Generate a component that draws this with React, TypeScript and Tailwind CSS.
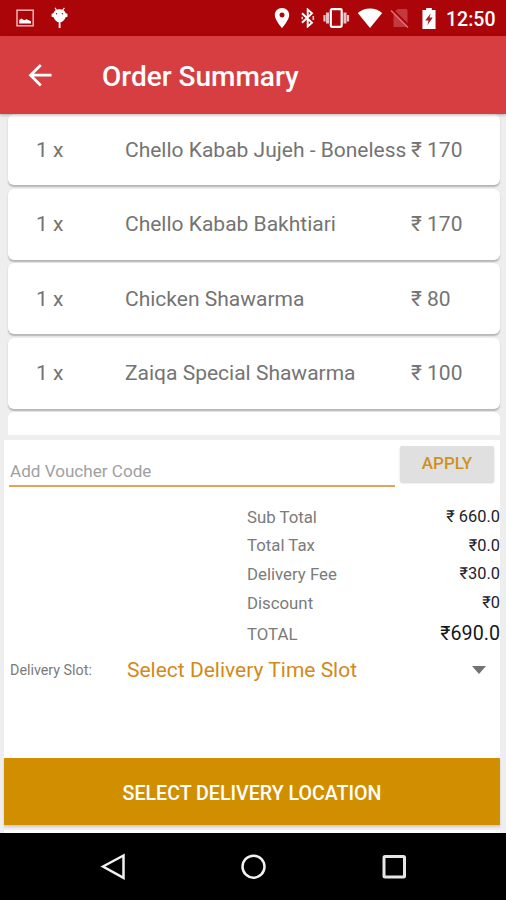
import React from "react";

type Item = { qty: string; name: string; price: string };

const items: Item[] = [
  { qty: "1 x", name: "Chello Kabab Jujeh - Boneless", price: "₹ 170" },
  { qty: "1 x", name: "Chello Kabab Bakhtiari", price: "₹ 170" },
  { qty: "1 x", name: "Chicken Shawarma", price: "₹ 80" },
  { qty: "1 x", name: "Zaiqa Special Shawarma", price: "₹ 100" },
];

const charges = [
  { label: "Sub Total", value: "₹ 660.0" },
  { label: "Total Tax", value: "₹0.0" },
  { label: "Delivery Fee", value: "₹30.0" },
  { label: "Discount", value: "₹0" },
];

function StatusBar() {
  return (
    <header className="flex h-9 shrink-0 items-center bg-[#ab0509] text-white">
      <svg className="ml-4 h-[18px] w-[18px]" viewBox="0 0 18 18" fill="none">
        <rect x="1" y="1.2" width="16.2" height="15.6" stroke="#f0b4b4" strokeWidth="1.5" />
        <path d="M3.2 14.6V11l2.2-1.6L8 11.2l2.6-1 4.4 2v2.4z" fill="#fff" />
      </svg>
      <svg className="ml-[17px] h-[22px] w-[17px]" viewBox="0 0 17 22">
        <path d="M4 .8 6 4M13.4.8 11.2 4" stroke="#fff" strokeWidth="1.2" />
        <path
          fill="#fff"
          d="M8.5 2.2c3.2 0 5.4 1.4 6.1 3.8l1.9 1v2.7l-1.9.6c-.8 2.7-2.8 4.6-5.1 5v5.7H7.7v-5.7c-2.3-.4-4.3-2.3-5.1-5L.6 9.7V7l1.900-1c.6-2.400 2.800-3.800 6-3.800z"
        />
        <circle cx="5.6" cy="6.8" r=".8" fill="#b51a1e" />
        <circle cx="11.5" cy="6.8" r=".8" fill="#b51a1e" />
      </svg>
      <div className="ml-auto flex items-center">
        <svg className="h-5 w-4" viewBox="0 0 16 20">
          <path fill="#fff" fillRule="evenodd" d="M8 0C3.9 0 .8 3.1.8 7c0 5 7.2 13 7.2 13s7.2-8 7.2-13c0-3.9-3.1-7-7.2-7zm0 4.5a2.500 2.500 0 1 1 0 5 2.500 2.500 0 0 1 0-5z" />
        </svg>
        <svg className="ml-[10px] h-5 w-4" viewBox="0 0 16 20" fill="none" stroke="#fff" strokeWidth="1.9">
          <path d="M2 5.2 12 14.8 7.7 18.500V1.500L12 5.2 2 14.8" />
          <path d="M13.3 8v4M2.300 8.800v2.400" strokeWidth="1.6" opacity=".8" />
        </svg>
        <svg className="ml-[6px] h-5 w-7" viewBox="0 0 28 20" fill="none">
          <rect x="8.8" y="1.2" width="10.9" height="17.6" rx="1.2" stroke="#fff" strokeWidth="2.2" />
          <path d="M5.5 4.5v11M23 4.5v11" stroke="#fff" strokeOpacity=".75" strokeWidth="3" />
          <path d="M2.5 7v6.5M26 7v6.5" stroke="#fff" strokeOpacity=".75" strokeWidth="2.2" />
        </svg>
        <svg className="ml-[7px] h-5 w-[26px]" viewBox="0 0 26 20">
          <path fill="#fff" d="M.8 5C4.5 1.8 8.5.4 13 .4S21.5 1.8 25.200 5L13 20z" />
        </svg>
        <svg className="ml-[7px] h-5 w-5" viewBox="0 0 20 20">
          <path fill="#c3393d" d="M7.5 1H16q1.5 0 1.5 1.5V19H3.500V5z" />
          <path d="M2.8 2 20 19" stroke="#ab0509" strokeWidth="2" />
          <path d="M1 2.500 18 19.500" stroke="#d87475" strokeWidth="1.5" />
        </svg>
        <svg className="ml-3 h-[21px] w-[14px]" viewBox="0 0 15 22" preserveAspectRatio="none">
          <path fill="#fff" d="M4.500 0h6v2.200h4V22H.5V2.200h4z" />
          <path fill="#a51a1e" d="M9.4 5.5 3.5 13H7l-1.200 5L11.500 10H8z" />
        </svg>
        <span className="ml-[10px] mt-[3px] w-[60px] whitespace-nowrap text-[19.5px] leading-5 font-medium">12:50</span>
      </div>
    </header>
  );
}

function AppBar() {
  return (
    <div className="relative z-10 flex h-[78px] shrink-0 items-center bg-[#d63e41] text-white shadow-[0_1px_3px_rgba(0,0,0,0.3)]">
      <svg className="ml-[28px] h-6 w-6" viewBox="0 0 24 24" fill="none" stroke="#fff" strokeWidth="2.7">
        <path d="M23.5 12.2H2.5M12.8 2 2.5 12.2l10.300 10.300" />
      </svg>
      <h1 className="mt-[3px] ml-[50px] text-[28px] leading-8 font-medium whitespace-nowrap">Order Summary</h1>
    </div>
  );
}

function ItemCard({ item }: { item: Item }) {
  return (
    <div className="flex h-[71px] shrink-0 items-center rounded-[6px] bg-white pt-[2px] pl-7 text-[21px] text-[#747474] shadow-[0_1.5px_1.5px_rgba(0,0,0,0.24)]">
      <span className="w-[89px]">{item.qty}</span>
      <span className="w-[286px] whitespace-nowrap">{item.name}</span>
      <span className="whitespace-nowrap">{item.price}</span>
    </div>
  );
}

function NavBar() {
  return (
    <nav className="flex h-[67px] shrink-0 items-center bg-black">
      <svg className="ml-[100px] h-7 w-[26px]" viewBox="0 0 26 28" fill="none" stroke="#f2f2f2" strokeWidth="2.5">
        <path d="M3 13.5 23.5 2.5v22.3z" />
      </svg>
      <svg className="ml-[114px] h-7 w-7" viewBox="0 0 28 28" fill="none" stroke="#f2f2f2" strokeWidth="2.5">
        <circle cx="13.5" cy="13.7" r="11" />
      </svg>
      <svg className="ml-[113px] h-7 w-7" viewBox="0 0 28 28" fill="none" stroke="#e6e6e6" strokeWidth="3">
        <rect x="3" y="3.5" width="20.5" height="20.5" rx="1" />
      </svg>
    </nav>
  );
}

export default function App() {
  return (
    <div className="flex h-[900px] w-[506px] flex-col overflow-hidden bg-[#eeeeee] font-[Roboto,sans-serif]">
      <StatusBar />
      <AppBar />
      <main className="flex h-[719px] shrink-0 flex-col">
        <div className="flex h-[321px] shrink-0 flex-col gap-[3.5px] overflow-hidden pr-[6px] pl-2">
          {items.map((item) => (
            <ItemCard key={item.name} item={item} />
          ))}
          <div className="h-[71px] shrink-0 rounded-[6px] bg-white" />
        </div>

        <section className="mt-[5px] mr-[6px] ml-1 flex h-[385px] shrink-0 flex-col bg-white">
          <div className="flex h-[60px] shrink-0 pl-[5px]">
            <div className="flex h-[47px] w-[386px] items-end border-b-2 border-b-[#dfa558] pl-[1px] text-[17.1px] text-[#a0a0a0]">
              Add Voucher Code
            </div>
            <button className="mt-[6px] ml-[5px] flex h-[36px] w-[94px] items-center justify-center rounded-[2px] bg-[#e0e0e0] text-[17px] font-medium text-[#cf911d] shadow-[0_1px_2px_rgba(0,0,0,0.18)]">
              APPLY
            </button>
          </div>
          <dl className="flex flex-col pt-[3px] pl-[243px] text-[16.8px]">
            {charges.map((c) => (
              <div key={c.label} className="flex h-[28.7px] items-center justify-between">
                <dt className="text-[#7b7b7b]">{c.label}</dt>
                <dd className="text-[16.4px] text-[#22222c]">{c.value}</dd>
              </div>
            ))}
            <div className="flex h-[33px] items-center justify-between">
              <dt className="text-[#7b7b7b]">TOTAL</dt>
              <dd className="text-[19.7px] text-[#16161f]">₹690.0</dd>
            </div>
          </dl>
          <div className="flex h-[39px] items-center pl-[6px]">
            <span className="w-[117px] text-[14.3px] text-[#7b7b7b]">Delivery Slot:</span>
            <span className="text-[21px] whitespace-nowrap text-[#d28a18]">Select Delivery Time Slot</span>
            <svg className="mr-[14px] mb-[1px] ml-auto h-[8px] w-[14px]" viewBox="0 0 14 8">
              <path d="M0 0h14L7 8z" fill="#737373" />
            </svg>
          </div>
          <button className="mt-auto flex h-[67px] shrink-0 items-center justify-center bg-[#d18f00] pt-[4px] text-[19.6px] font-medium text-white shadow-[0_2px_2px_rgba(0,0,0,0.15)]">
            SELECT DELIVERY LOCATION
          </button>
        </section>
        <div className="mt-[5px] mr-[6px] ml-1 h-[3px] shrink-0 bg-white" />
      </main>
      <NavBar />
    </div>
  );
}
